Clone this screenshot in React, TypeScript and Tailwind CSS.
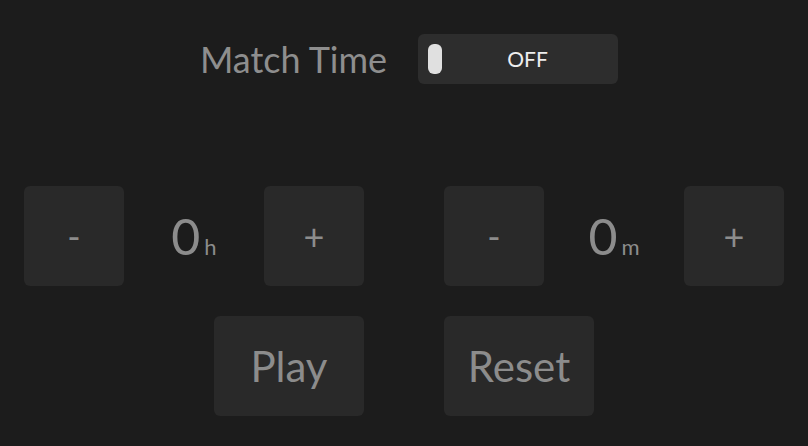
import { useState } from 'react'

function Stepper({ value, unit }: { value: number; unit: string }) {
  return (
    <div className="flex items-center">
      <button className="w-[100px] h-[100px] rounded-md bg-[#292929] text-[36px] text-[#8c8c8c] flex items-center justify-center">
        -
      </button>
      <div className="w-[140px] flex items-baseline justify-center text-[#8c8c8c]">
        <span className="text-[50px] leading-none">{value}</span>
        <span className="text-[22px] leading-none ml-1">{unit}</span>
      </div>
      <button className="w-[100px] h-[100px] rounded-md bg-[#292929] text-[36px] text-[#8c8c8c] flex items-center justify-center">
        +
      </button>
    </div>
  )
}

export default function App() {
  const [on, setOn] = useState(false)

  return (
    <div
      className="w-[808px] h-[446px] bg-[#1c1c1c] flex flex-col items-center pt-[34px]"
      style={{ fontFamily: 'Lato, "Open Sans", sans-serif' }}
    >
      <div className="flex items-center gap-[31px] pl-[10px] h-[50px]">
        <span className="text-[36px] leading-[50px] text-[#8e8e8e]">Match Time</span>
        <button
          onClick={() => setOn(!on)}
          className="relative w-[200px] h-[50px] rounded-md bg-[#2d2d2d] flex items-center justify-center pl-[19px]"
        >
          <span className="absolute left-[10px] top-[10px] w-[14px] h-[30px] rounded-md bg-[#e0e0e0]" />
          <span className="text-[21px] text-[#eeeeee]">{on ? 'ON' : 'OFF'}</span>
        </button>
      </div>

      <div className="flex gap-[80px] mt-[102px]">
        <Stepper value={0} unit="h" />
        <Stepper value={0} unit="m" />
      </div>

      <div className="flex gap-[80px] mt-[30px]">
        <button className="w-[150px] h-[100px] rounded-md bg-[#292929] text-[42px] text-[#8c8c8c]">Play</button>
        <button className="w-[150px] h-[100px] rounded-md bg-[#292929] text-[42px] text-[#8c8c8c]">Reset</button>
      </div>
    </div>
  )
}
